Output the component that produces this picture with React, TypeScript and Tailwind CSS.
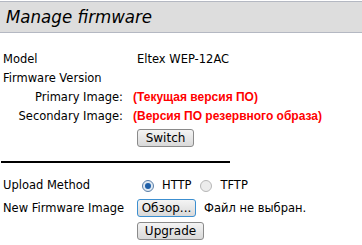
const Radio = ({ checked }: { checked?: boolean }) => (
  <span
    className={`inline-flex items-center justify-center w-[12px] h-[12px] rounded-full border ${
      checked ? "border-[#5b7fa8] bg-[#dfe9f3]" : "border-[#b7b7b7] bg-[#ececec]"
    }`}
  >
    {checked && <span className="w-[6px] h-[6px] rounded-full bg-[#1e5fa8]" />}
  </span>
);

const Btn = ({ children, focused, w }: { children: React.ReactNode; focused?: boolean; w: string }) => (
  <button
    className={`h-[18px] ${w} rounded-[3px] border bg-gradient-to-b from-[#f4f4f4] to-[#d9d9d9] text-[12px] leading-none text-black ${
      focused ? "border-[#3c8fd0]" : "border-[#8a8a8a]"
    }`}
  >
    {children}
  </button>
);

const App = () => {
  return (
    <div className="w-[362px] h-[245px] bg-white font-['DejaVu_Sans',Verdana,sans-serif] text-[11.5px] text-black pt-px">
      <div className="h-[32px] bg-[#dddddd] border-t border-b border-[#b4b8c2] flex items-center pl-[6px]">
        <h1 className="text-[18.5px] italic font-normal text-black leading-none font-['DejaVu_Sans_Condensed','DejaVu_Sans',sans-serif]">
          Manage firmware
        </h1>
      </div>

      <div className="pt-[19px] pl-[3px]">
        <div className="grid grid-cols-[130px_1fr] gap-y-[5px] items-center">
          <span className="h-[14px] leading-[14px]">Model</span>
          <span className="h-[14px] leading-[14px] pl-[4px]">Eltex WEP-12AC</span>
          <span className="h-[14px] leading-[14px] col-span-2">Firmware Version</span>
          <span className="h-[14px] leading-[14px] text-right pr-[10px]">Primary Image:</span>
          <span className="h-[14px] leading-[14px] font-['Liberation_Sans',Arial,sans-serif] font-bold text-[12px] text-[#ff0000]">
            (Текущая версия ПО)
          </span>
          <span className="h-[14px] leading-[14px] text-right pr-[10px]">Secondary Image:</span>
          <span className="h-[14px] leading-[14px] font-['Liberation_Sans',Arial,sans-serif] font-bold text-[12px] text-[#ff0000]">
            (Версия ПО резервного образа)
          </span>
          <span />
          <div className="pt-px pl-[4px]">
            <Btn w="w-[57px]">Switch</Btn>
          </div>
        </div>
      </div>

      <div className="mt-[14px] ml-px w-[229px] h-[2px] bg-black" />

      <div className="pt-[14px] pl-[3px]">
        <div className="grid grid-cols-[134px_1fr] gap-y-[5px] items-center">
          <span className="h-[17px] leading-[17px]">Upload Method</span>
          <div className="flex items-center h-[17px]">
            <span className="ml-[5px] flex"><Radio checked /></span>
            <span className="ml-[8px]">HTTP</span>
            <span className="ml-[9px] flex"><Radio /></span>
            <span className="ml-[8px]">TFTP</span>
          </div>
          <span className="h-[18px] leading-[18px]">New Firmware Image</span>
          <div className="flex items-center gap-[8px]">
            <Btn focused w="w-[59px]">Обзор...</Btn>
            <span>Файл не выбран.</span>
          </div>
          <span />
          <div>
            <Btn w="w-[67px]">Upgrade</Btn>
          </div>
        </div>
      </div>
    </div>
  );
};

export default App;
